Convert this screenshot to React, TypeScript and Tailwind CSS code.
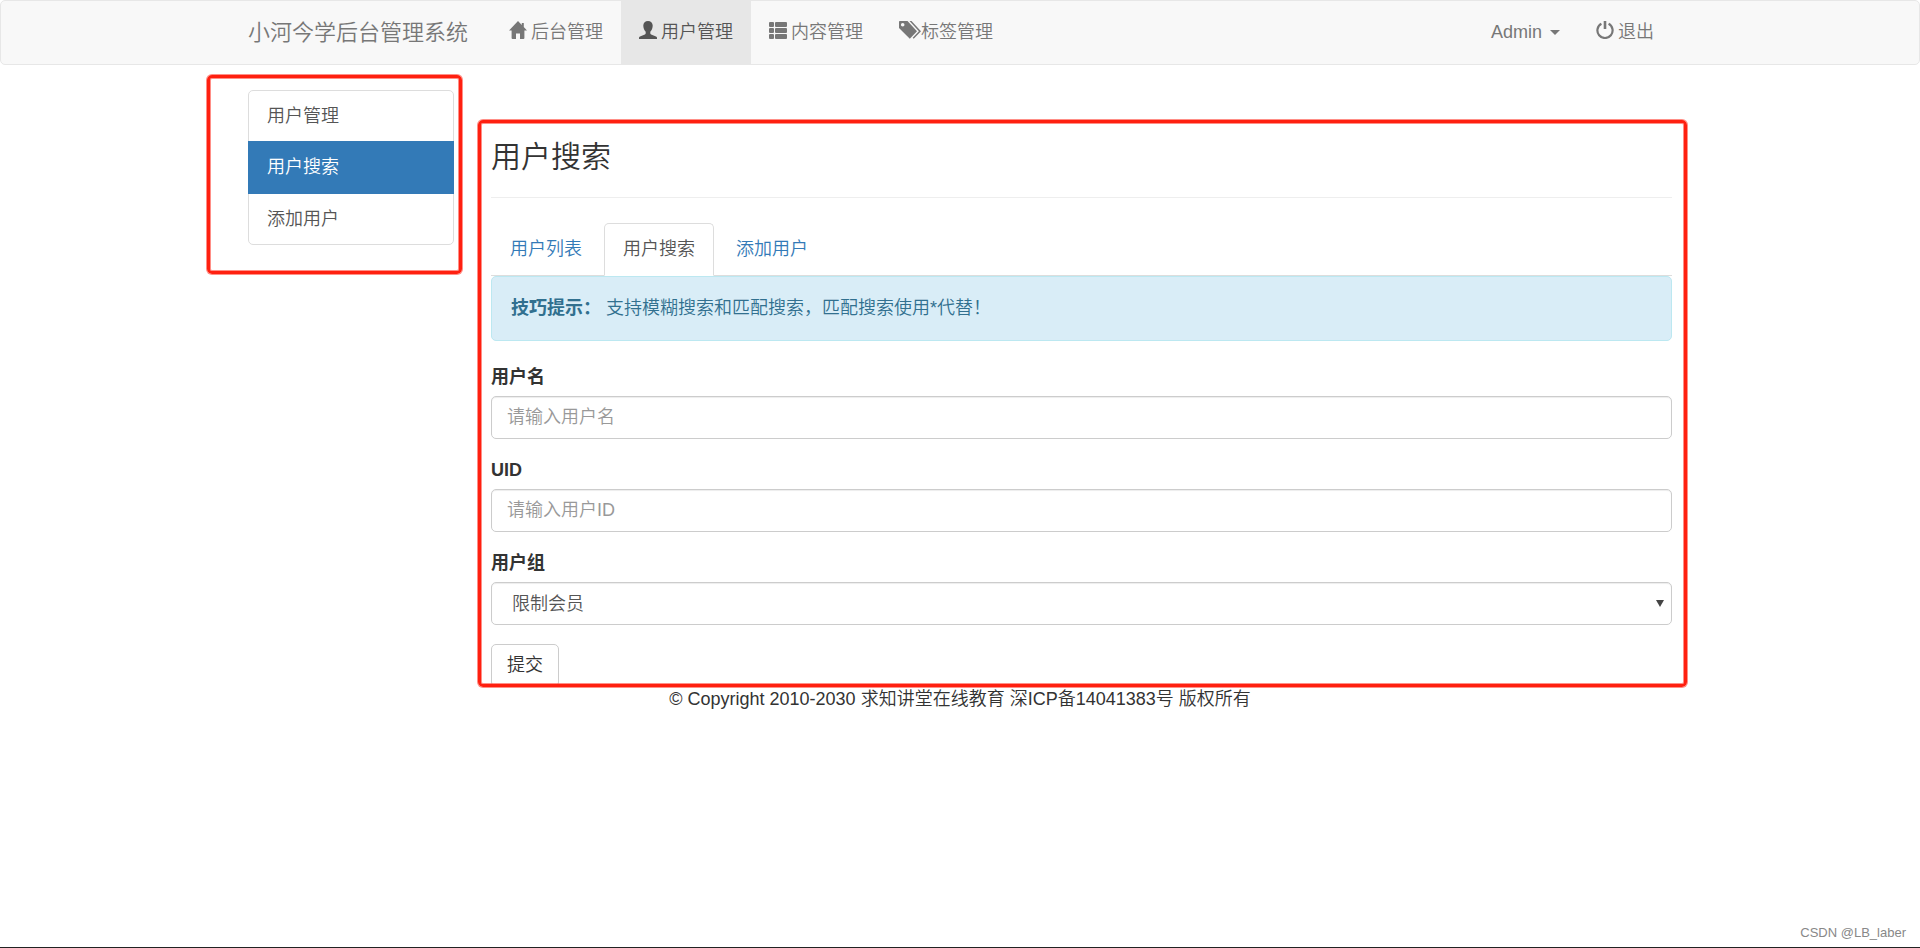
import type { ReactNode } from "react";

interface IconProps {
  className?: string;
}

const HomeIcon = ({ className }: IconProps) => (
  <svg viewBox="0 0 18 18" className={className} fill="currentColor" aria-hidden="true">
    <path d="M9 0 0 9.5h2.6V17a1 1 0 0 0 1 1H7v-5.600h4V18h3.400a1 1 0 0 0 1-1V9.500H18l-3.200-3.400V2h-2v2z" />
  </svg>
);

const UserIcon = ({ className }: IconProps) => (
  <svg viewBox="0 0 18 18" className={className} fill="currentColor" aria-hidden="true">
    <path d="M9 0C6.300 0 4.300 1.900 4.300 4.500c0 2.500.9 4.800 2.400 6.200v1.500c0 .6-.3 1-.8 1.200L1 15.400c-.6.3-1 .8-1 1.400V18h18v-1.200c0-.6-.4-1.100-1-1.400l-4.900-2c-.5-.2-.8-.6-.8-1.200v-1.500c1.500-1.400 2.400-3.700 2.400-6.200C13.700 1.900 11.700 0 9 0z" />
  </svg>
);

const ListIcon = ({ className }: IconProps) => (
  <svg viewBox="0 0 18 18" className={className} fill="currentColor" aria-hidden="true">
    <rect x="0" y="1" width="5" height="5" rx="1" />
    <rect x="6" y="1" width="12" height="5" rx="1" />
    <rect x="0" y="7" width="5" height="5" rx="1" />
    <rect x="6" y="7" width="12" height="5" rx="1" />
    <rect x="0" y="13" width="5" height="5" rx="1" />
    <rect x="6" y="13" width="12" height="5" rx="1" />
  </svg>
);

const TagsIcon = ({ className }: IconProps) => (
  <svg viewBox="0 0 22 18" className={className} fill="currentColor" aria-hidden="true">
    <path
      fillRule="evenodd"
      d="M.8 0h7.700L18 10.200 10.800 17.800 0 7V.8C0 .3.300 0 .8 0zM3.700 1.900a1.800 1.800 0 1 0 0 3.600 1.800 1.800 0 0 0 0-3.600z"
    />
    <path d="M10.500 0h2L22 10.200l-7.300 7.600-1-1 6.200-6.600z" />
  </svg>
);

const PowerIcon = ({ className }: IconProps) => (
  <svg viewBox="0 0 18 18" className={className} fill="none" stroke="currentColor" aria-hidden="true">
    <path d="M5.400 2.700a7.600 7.600 0 1 0 7.200 0" strokeWidth="2.200" />
    <path d="M9 0v8" strokeWidth="2.600" />
  </svg>
);

interface NavItemProps {
  icon?: ReactNode;
  active?: boolean;
  tight?: boolean;
  children: ReactNode;
}

const NavItem = ({ icon, active, tight, children }: NavItemProps) => (
  <li>
    <a
      href="#"
      className={`flex h-full items-center px-[18px] ${tight ? "" : "gap-1"} ${
        active ? "bg-[#e7e7e7] text-[#555]" : "text-[#777]"
      }`}
    >
      {icon}
      {children}
    </a>
  </li>
);

// red outline drawn around a region
const Marker = ({ className }: { className: string }) => (
  <div
    className={`pointer-events-none absolute rounded-[5px] border-3 border-[#ff2010] shadow-[0_0_0_1px_#ff201080,inset_0_0_0_1px_#ff201080] ${className}`}
  />
);

const sideLinks = ["用户管理", "用户搜索", "添加用户"];
const tabs = ["用户列表", "用户搜索", "添加用户"];
const current = "用户搜索";

const fieldClass =
  "block h-[43px] w-full rounded-[5px] border border-[#ccc] bg-white text-[#555] shadow-[inset_0_1px_1px_rgba(0,0,0,0.075)] placeholder:text-[#999]";
const labelClass = "mb-[6px] block font-bold";

const Navbar = () => (
  <nav className="h-[65px] rounded-[5px] border border-[#e7e7e7] bg-[#f8f8f8]">
    <div className="mx-auto flex h-full max-w-[1424px]">
      <a href="#" className="mr-[23px] flex items-center text-[22px] text-[#777]">
        小河今学后台管理系统
      </a>
      <ul className="flex">
        <NavItem icon={<HomeIcon className="mb-1.5 size-[18px]" />}>后台管理</NavItem>
        <NavItem active icon={<UserIcon className="mb-1.5 size-[18px]" />}>
          用户管理
        </NavItem>
        <NavItem icon={<ListIcon className="mb-1.5 size-[18px]" />}>内容管理</NavItem>
        <NavItem tight icon={<TagsIcon className="mb-1.5 h-[18px] w-[22px]" />}>
          标签管理
        </NavItem>
      </ul>
      <ul className="ml-auto flex">
        <NavItem>
          Admin
          <span className="ml-1 border-x-5 border-t-5 border-x-transparent border-t-[#777]" />
        </NavItem>
        <NavItem icon={<PowerIcon className="mb-1.5 size-[18px]" />}>退出</NavItem>
      </ul>
    </div>
  </nav>
);

const Sidebar = () => (
  <aside className="relative w-[206px] shrink-0 self-start">
    <div className="rounded-[5px] border border-[#ddd]">
      {sideLinks.map((text) => (
        <a
          key={text}
          href="#"
          className={`-mx-px block px-[19px] ${
            text === current ? "bg-[#337ab7] py-[14px] text-white" : "pt-[13px] pb-[12px] text-[#555]"
          }`}
        >
          {text}
        </a>
      ))}
    </div>
    <Marker className="-top-[15px] -right-[8px] -bottom-[29px] -left-[41px]" />
  </aside>
);

const SearchForm = () => (
  <form className="mt-6" onSubmit={(e) => e.preventDefault()}>
    <div className="mb-[19px]">
      <label htmlFor="username" className={labelClass}>
        用户名
      </label>
      <input
        id="username"
        type="text"
        placeholder="请输入用户名"
        className={`${fieldClass} px-[15px]`}
      />
    </div>
    <div className="mb-[19px]">
      <label htmlFor="uid" className={labelClass}>
        UID
      </label>
      <input id="uid" type="text" placeholder="请输入用户ID" className={`${fieldClass} px-[15px]`} />
    </div>
    <div className="relative mb-[19px]">
      <label htmlFor="group" className={labelClass}>
        用户组
      </label>
      <select id="group" className={`${fieldClass} appearance-none px-5 pt-0.5`}>
        <option>限制会员</option>
      </select>
      <span className="pointer-events-none absolute right-[8px] bottom-[18px] border-x-4 border-t-7 border-x-transparent border-t-[#444]" />
    </div>
    <button type="submit" className="h-[43px] rounded-[5px] border border-[#ccc] bg-white px-[15px]">
      提交
    </button>
  </form>
);

const App = () => {
  return (
    <div className="flex min-h-screen flex-col border-b border-[#222] bg-white font-['Liberation_Sans','Noto_Sans_CJK_SC',sans-serif] text-[18px] leading-[25px] font-[350] text-[#333]">
      <Navbar />

      <div className="mx-auto mt-[25px] flex w-full max-w-[1424px] gap-[37px]">
        <Sidebar />

        <main className="relative mt-[50px] min-w-0 flex-1">
          <h1 className="mb-[25px] border-b border-[#eee] pb-[24px] text-[30px] leading-[33px]">
            用户搜索
          </h1>

          <ul className="flex gap-[3px] border-b border-[#ddd]">
            {tabs.map((text) => (
              <li key={text} className="-mb-px">
                <a
                  href="#"
                  className={`block rounded-t-[5px] border px-[18px] py-[13px] ${
                    text === current
                      ? "border-[#ddd] border-b-white bg-white text-[#555]"
                      : "border-transparent text-[#337ab7]"
                  }`}
                >
                  {text}
                </a>
              </li>
            ))}
          </ul>

          <div className="rounded-[5px] border border-[#bce8f1] bg-[#d9edf7] p-[19px] text-[#31708f]">
            <strong className="font-bold">技巧提示：</strong> 支持模糊搜索和匹配搜索，匹配搜索使用*代替！
          </div>

          <SearchForm />
          <Marker className="-top-[20px] -right-[15px] bottom-0 -left-[13px]" />
        </main>
      </div>

      <footer className="text-center">
        © Copyright 2010-2030 求知讲堂在线教育 深ICP备14041383号 版权所有
      </footer>

      <p className="mt-auto pr-[14px] pb-[2px] text-right text-[13px] text-[#888]">CSDN @LB_laber</p>
    </div>
  );
};

export default App;
